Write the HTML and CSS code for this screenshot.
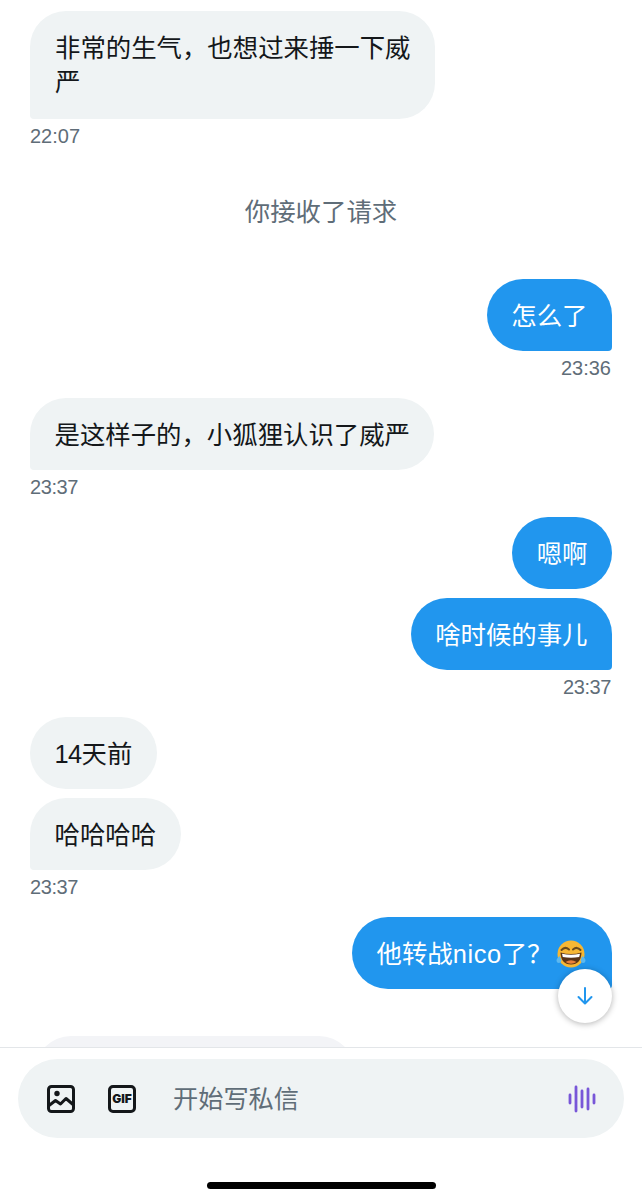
FILE: index.html
```html
<!DOCTYPE html>
<html lang="zh">
  <head>
    <meta charset="UTF-8" />
    <meta name="viewport" content="width=device-width, initial-scale=1.0" />
    <title>私信</title>
    <link rel="stylesheet" href="styles.css">
  </head>
  <body>
    <div class="screen">
      <div class="chat">
        <div class="group in">
          <div class="bubble narrow">非常的生气，也想过来捶一下威严</div>
          <div class="time">22:07</div>
        </div>

        <div class="notice">你接收了请求</div>

        <div class="group out">
          <div class="bubble">怎么了</div>
          <div class="time">23:36</div>
        </div>

        <div class="group in">
          <div class="bubble">是这样子的，小狐狸认识了威严</div>
          <div class="time tight">23:37</div>
        </div>

        <div class="group out">
          <div class="bubble round">嗯啊</div>
          <div class="bubble">啥时候的事儿</div>
          <div class="time tight">23:37</div>
        </div>

        <div class="group in">
          <div class="bubble round"><span class="digits">14</span>天前</div>
          <div class="bubble">哈哈哈哈</div>
          <div class="time tight">23:37</div>
        </div>

        <div class="group out">
          <div class="bubble with-emoji">
            <span>他转战<span class="latin">nico</span>了？</span>
            <svg class="emoji" viewBox="0 0 30 30">
              <circle cx="15" cy="15" r="13.5" fill="#f7b733" />
              <path d="M5.500 11q3.500-4 7.500-.5M17 10.500q4-3.500 7.500.5" fill="none" stroke="#6b4a1c" stroke-width="2" stroke-linecap="round" />
              <path d="M4.500 13.500q10.500 3 21 0q-.5 12-10.500 12t-10.500-12z" fill="#5a3417" />
              <path d="M6 14.800q9 2 18 0l-.8 3.200q-8.200 1.400-16.400 0z" fill="#fff" />
              <path d="M9.500 23q5.500-3.500 11 0q-5.500 3.500-11 0z" fill="#e9803a" />
              <path d="M3.500 17q-3 2.500-3 5q.4 2.200 2.600 2q2.200-.3 2.200-2.500q0-2-1.800-4.500z" fill="#5cb8f0" />
              <path d="M26.500 17q3 2.500 3 5q-.4 2.200-2.600 2q-2.200-.3-2.200-2.500q0-2 1.800-4.500z" fill="#5cb8f0" />
            </svg>
          </div>
        </div>

        <div class="bubble-peek"></div>

        <button class="scroll-down">
          <svg viewBox="0 0 24 24" width="24" height="24">
            <path d="M12 4v15M5.500 13l6.500 6.500 6.500-6.500" fill="none" stroke="#2196ee" stroke-width="2" stroke-linecap="round" stroke-linejoin="round" />
          </svg>
        </button>
      </div>

      <div class="composer">
        <div class="input">
          <svg class="icon" viewBox="0 0 28 28">
            <rect x="1.500" y="1.500" width="25" height="25" rx="3" fill="none" stroke="#14171a" stroke-width="3" />
            <circle cx="10" cy="8.500" r="2.700" fill="#14171a" />
            <path d="M2 20.500l6.500-5 5 3.500 5.500-5.500 7 6" fill="none" stroke="#14171a" stroke-width="3" stroke-linejoin="round" />
          </svg>
          <div class="gif">GIF</div>
          <div class="placeholder">开始写私信</div>
          <svg class="voice" viewBox="0 0 28 28">
            <path d="M2 10v8M8 2v24M14 6v16M20 4v20M26 10v8" fill="none" stroke="#7856d8" stroke-width="2.800" stroke-linecap="round" />
          </svg>
        </div>
        <div class="home-bar"></div>
      </div>
    </div>
  </body>
</html>
```

FILE: styles.css
```css
body {
  margin: 0;
  background-color: #fff;
  font-family: "Liberation Sans", "Noto Sans CJK SC", sans-serif;
  color: #14171a;
}

.screen {
  width: 642px;
  height: 1200px;
  overflow: hidden;
}

.chat {
  position: relative;
  box-sizing: border-box;
  height: 1047px;
  padding: 11px 30px 0;
  overflow: hidden;
  display: flex;
  flex-direction: column;
}

.group {
  display: flex;
  flex-direction: column;
  gap: 9px;
  margin-bottom: 13px;
}

.group.in {
  align-items: flex-start;
}

.group.out {
  align-items: flex-end;
}

.bubble {
  box-sizing: border-box;
  padding: 19px 24.5px 17px;
  font-size: 25.4px;
  line-height: 36px;
  border-radius: 36px;
}

.bubble.narrow {
  width: 405px;
  padding: 20px 24px 20px 25px;
  line-height: 34px;
}

.digits {
  letter-spacing: -0.6px;
}

.latin {
  letter-spacing: 0.6px;
}

.group.in .bubble {
  background-color: #eff3f4;
  border-bottom-left-radius: 4px;
}

.group.out .bubble {
  background-color: #2196ee;
  color: #fff;
  border-bottom-right-radius: 4px;
}

.group.in .bubble.round,
.group.out .bubble.round {
  border-radius: 36px;
}

.with-emoji {
  display: flex;
  align-items: center;
  gap: 3px;
}

.emoji {
  width: 30px;
  height: 30px;
  margin-right: 2px;
  flex-shrink: 0;
}

.time {
  margin-top: -9px;
  font-size: 20px;
  line-height: 34px;
  color: #5f6d78;
}

.time.tight {
  letter-spacing: -0.4px;
}

.group.out .time {
  margin-right: 1px;
}

.notice {
  margin: 28px 0 49px;
  font-size: 25.4px;
  line-height: 36px;
  text-align: center;
  color: #5f6d78;
}

.bubble-peek {
  width: 320px;
  height: 72px;
  margin: 34px 0 0 5px;
  flex-shrink: 0;
  border-radius: 36px;
  background-color: #f3f4f7;
}

.scroll-down {
  position: absolute;
  left: 558px;
  top: 969px;
  width: 54px;
  height: 54px;
  padding: 0;
  border: none;
  border-radius: 50%;
  background-color: #fff;
  box-shadow: 0 1px 6px rgba(0, 0, 0, 0.3);
  display: flex;
  justify-content: center;
  align-items: center;
}

.composer {
  border-top: 1px solid #e3e6e9;
  padding: 11px 18px 0;
}

.input {
  height: 79px;
  padding: 0 28px 0 29px;
  border-radius: 40px;
  background-color: #eff3f4;
  display: flex;
  align-items: center;
}

.icon,
.voice {
  width: 28px;
  height: 28px;
  flex-shrink: 0;
}

.gif {
  box-sizing: border-box;
  width: 28px;
  height: 28px;
  margin-left: 33px;
  border: 3px solid #14171a;
  border-radius: 5px;
  font-family: Inter, sans-serif;
  font-size: 12px;
  font-weight: 900;
  line-height: 22px;
  text-align: center;
  flex-shrink: 0;
}

.placeholder {
  flex: 1;
  margin-left: 37px;
  margin-top: 1px;
  font-size: 25.2px;
  line-height: 34px;
  color: #5f6d78;
}

.home-bar {
  width: 229px;
  height: 7px;
  margin: 44px auto 0;
  border-radius: 4px;
  background-color: #000;
}
```
